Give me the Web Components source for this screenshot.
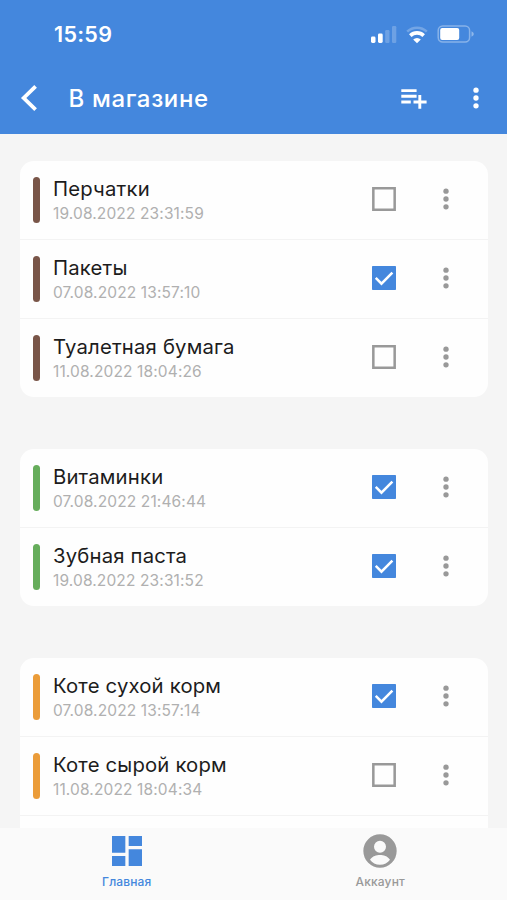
<!DOCTYPE html>
<html lang="ru">
<head>
<meta charset="utf-8">
<title>В магазине</title>
<style>
  html, body {
    margin: 0;
    height: 100%;
  }
  body {
    --primary: #4487dd;
    --muted: #999;
    font-family: Inter, "Liberation Sans", sans-serif;
    background: #f5f5f5;
    overflow: hidden;
  }
</style>
</head>
<body>
<shopping-app></shopping-app>

<script>
const GROUPS = [
  {
    color: "#795548",
    items: [
      { name: "Перчатки", date: "19.08.2022 23:31:59" },
      { name: "Пакеты", date: "07.08.2022 13:57:10", checked: true },
      { name: "Туалетная бумага", date: "11.08.2022 18:04:26" }
    ]
  },
  {
    color: "#66ad5b",
    items: [
      { name: "Витаминки", date: "07.08.2022 21:46:44", checked: true },
      { name: "Зубная паста", date: "19.08.2022 23:31:52", checked: true }
    ]
  },
  {
    color: "#eb9c39",
    items: [
      { name: "Коте сухой корм", date: "07.08.2022 13:57:14", checked: true },
      { name: "Коте сырой корм", date: "11.08.2022 18:04:34" },
      { name: "", date: "" }
    ]
  }
];

const ICONS = {
  back: ["0 0 32 32", `<path d="M23.6 4.4 11.7 16l11.9 11.6" fill="none" stroke="currentColor" stroke-width="3.8"/>`],
  playlistAdd: ["0 0 32 32", `<path d="M3.3 8.6h15.3M3.3 14.3h15.3M3.3 20h9.5M15.5 20h13.1M21.8 13v13.8" fill="none" stroke="currentColor" stroke-width="2.9"/>`],
  more: ["0 0 24 24", `<circle cx="12" cy="6.1" r="2"/><circle cx="12" cy="12" r="2"/><circle cx="12" cy="17.9" r="2"/>`],
  home: ["0 0 24 24", `<path d="M3 13h8V3H3v10zm0 8h8v-6H3v6zm10 0h8V11h-8v10zm0-18v6h8V3h-8z"/>`],
  account: ["0 0 24 24", `<path fill-rule="evenodd" d="M12 2a10 10 0 1 0 0 20 10 10 0 0 0 0-20zm0 3.9a3.6 3.6 0 1 1 0 7.2 3.6 3.6 0 0 1 0-7.2zM6 17.2c1.5-2.2 3.9-2.8 6-2.8s4.5.6 6 2.8c-1.3 1.9-3.5 3-6 3s-4.7-1.1-6-3z"/>`],
  checkOff: ["0 0 24 24", `<path d="M4 4h16v16H4z" fill="none" stroke="currentColor" stroke-width="1.9"/>`],
  checkOn: ["0 0 24 24", `<rect x="3" y="3" width="18" height="18" rx=".6"/><path d="m5.8 11.9 4.3 4.3L18.3 8" fill="none" stroke="#fff" stroke-width="1.9"/>`],
  signal: ["0 0 28 20", `<rect x="1" y="12.5" width="4.5" height="6.5" rx="1.4"/><rect x="8" y="9.5" width="4.7" height="9.5" rx="1.4"/><g opacity=".22"><rect x="15.2" y="6" width="4.3" height="13" rx="1.2"/><rect x="22" y="2" width="4.3" height="17" rx="1.2"/></g>`],
  wifi: ["0 0 24 20", `<path d="M2.2 7.6a14.2 14.2 0 0 1 19.6 0" fill="none" stroke="currentColor" stroke-width="2.6" opacity=".25"/><path d="M5.3 11.6a9.7 9.7 0 0 1 13.4 0" fill="none" stroke="currentColor" stroke-width="3.6"/><path d="M8.2 15.6a5.5 5.5 0 0 1 7.6 0L12 19.2z"/>`],
  battery: ["0 0 38 20", `<rect x="1.2" y="1.9" width="31.4" height="16.2" rx="4.5" fill="none" stroke="currentColor" stroke-width="1.5" opacity=".36"/><rect x="3.2" y="4" width="19" height="12" rx="2"/><path d="M34.5 7.2q2.3 1 2.3 2.8t-2.3 2.8z" opacity=".4"/>`]
};

class AppIcon extends HTMLElement {
  connectedCallback() {
    const [viewBox, shapes] = ICONS[this.getAttribute("name")];
    this.attachShadow({ mode: "open" }).innerHTML = `
      <style>
        :host { display: block; flex: none; width: 32px; height: 32px; }
        svg { display: block; width: 100%; height: 100%; fill: currentColor; }
      </style>
      <svg viewBox="${viewBox}" aria-hidden="true">${shapes}</svg>`;
  }
}

class StatusBar extends HTMLElement {
  connectedCallback() {
    this.attachShadow({ mode: "open" }).innerHTML = `
      <style>
        :host {
          display: flex;
          align-items: center;
          justify-content: space-between;
          height: 68px;
          padding: 0 33px 0 54px;
        }
        time { font-size: 21.5px; font-weight: 600; letter-spacing: .3px; }
        div { display: flex; align-items: center; }
        app-icon { height: 20px; }
        .signal { width: 28px; margin-top: -1px; }
        .wifi { width: 24px; margin: 0 8px 0 7px; }
        .battery { width: 38px; margin-right: -1px; }
      </style>
      <time>15:59</time>
      <div>
        <app-icon class="signal" name="signal"></app-icon>
        <app-icon class="wifi" name="wifi"></app-icon>
        <app-icon class="battery" name="battery"></app-icon>
      </div>`;
  }
}

class AppHeader extends HTMLElement {
  connectedCallback() {
    this.attachShadow({ mode: "open" }).innerHTML = `
      <style>
        :host { display: block; height: 134px; color: #fff; background: var(--primary); }
        .bar { display: flex; align-items: center; height: 60px; padding: 0 15px 0 12px; }
        h1 { flex: 1; margin: 0 0 0 24.5px; padding-top: 1px; font-size: 24px; line-height: 30px; font-weight: 500; letter-spacing: .65px; }
        .more { margin-left: 30px; }
      </style>
      <status-bar></status-bar>
      <div class="bar">
        <app-icon name="back"></app-icon>
        <h1><slot></slot></h1>
        <app-icon name="playlistAdd"></app-icon>
        <app-icon class="more" name="more"></app-icon>
      </div>`;
  }
}

class ShoppingItem extends HTMLElement {
  connectedCallback() {
    const checked = this.hasAttribute("checked");
    this.attachShadow({ mode: "open" }).innerHTML = `
      <style>
        :host {
          display: flex;
          align-items: center;
          box-sizing: border-box;
          height: 78px;
          padding: 0 26.5px 0 13px;
        }
        .mark { width: 7px; height: 46px; border-radius: 3.5px; background: var(--mark); }
        .text { flex: 1; margin-left: 13px; padding-top: 2px; white-space: nowrap; }
        .name { font-size: 20.3px; line-height: 26px; letter-spacing: .18px; color: #1c1c1c; }
        .date { font-size: 15.5px; line-height: 24px; letter-spacing: .13px; color: #b0b0b0; }
        app-icon { margin-top: -1px; color: var(--muted); }
        .on { color: var(--primary); }
        .more { margin-left: 30px; }
      </style>
      <span class="mark"></span>
      <div class="text">
        <div class="name"><slot></slot></div>
        <div class="date"><slot name="date"></slot></div>
      </div>
      <app-icon class="${checked ? "on" : "off"}" name="${checked ? "checkOn" : "checkOff"}"></app-icon>
      <app-icon class="more" name="more"></app-icon>`;
  }
}

class ShoppingGroup extends HTMLElement {
  connectedCallback() {
    this.attachShadow({ mode: "open" }).innerHTML = `
      <style>
        :host { display: block; border-radius: 14px; background: #fefefe; overflow: hidden; }
        ::slotted(:not(:first-child)) { border-top: 1px solid #f3f3f3; }
        div { display: flex; flex-direction: column; }
      </style>
      <div><slot></slot></div>`;
  }
}

class NavItem extends HTMLElement {
  connectedCallback() {
    this.attachShadow({ mode: "open" }).innerHTML = `
      <style>
        :host { display: flex; flex: 1; flex-direction: column; align-items: center; padding-top: 3px; color: var(--muted); }
        :host([active]) { color: var(--primary); }
        app-icon { width: 40px; height: 40px; }
        span { margin-top: 3px; font-size: 12px; line-height: 15px; font-weight: 500; letter-spacing: .15px; }
      </style>
      <app-icon name="${this.getAttribute("icon")}"></app-icon>
      <span><slot></slot></span>`;
  }
}

class ShoppingApp extends HTMLElement {
  connectedCallback() {
    const groups = GROUPS.map(({ color, items }) => `
      <shopping-group style="--mark: ${color}">${items.map((item) => `
        <shopping-item ${item.checked ? "checked" : ""}>${item.name}<span slot="date">${item.date}</span></shopping-item>`).join("")}
      </shopping-group>`).join("");

    this.attachShadow({ mode: "open" }).innerHTML = `
      <style>
        :host { display: flex; flex-direction: column; height: 100vh; overflow: hidden; }
        app-header { flex: none; }
        main {
          display: flex;
          flex: 1;
          flex-direction: column;
          gap: 52px;
          min-height: 0;
          padding: 26.5px 19px 0 20px;
          overflow: hidden;
        }
        shopping-group { flex: none; }
        shopping-item { box-sizing: content-box; }
        nav { display: flex; flex: none; height: 72px; background: #fafafa; }
      </style>
      <app-header>В магазине</app-header>
      <main>${groups}</main>
      <nav>
        <nav-item icon="home" active>Главная</nav-item>
        <nav-item icon="account">Аккаунт</nav-item>
      </nav>`;
  }
}

customElements.define("app-icon", AppIcon);
customElements.define("status-bar", StatusBar);
customElements.define("app-header", AppHeader);
customElements.define("shopping-item", ShoppingItem);
customElements.define("shopping-group", ShoppingGroup);
customElements.define("nav-item", NavItem);
customElements.define("shopping-app", ShoppingApp);
</script>
</body>
</html>
